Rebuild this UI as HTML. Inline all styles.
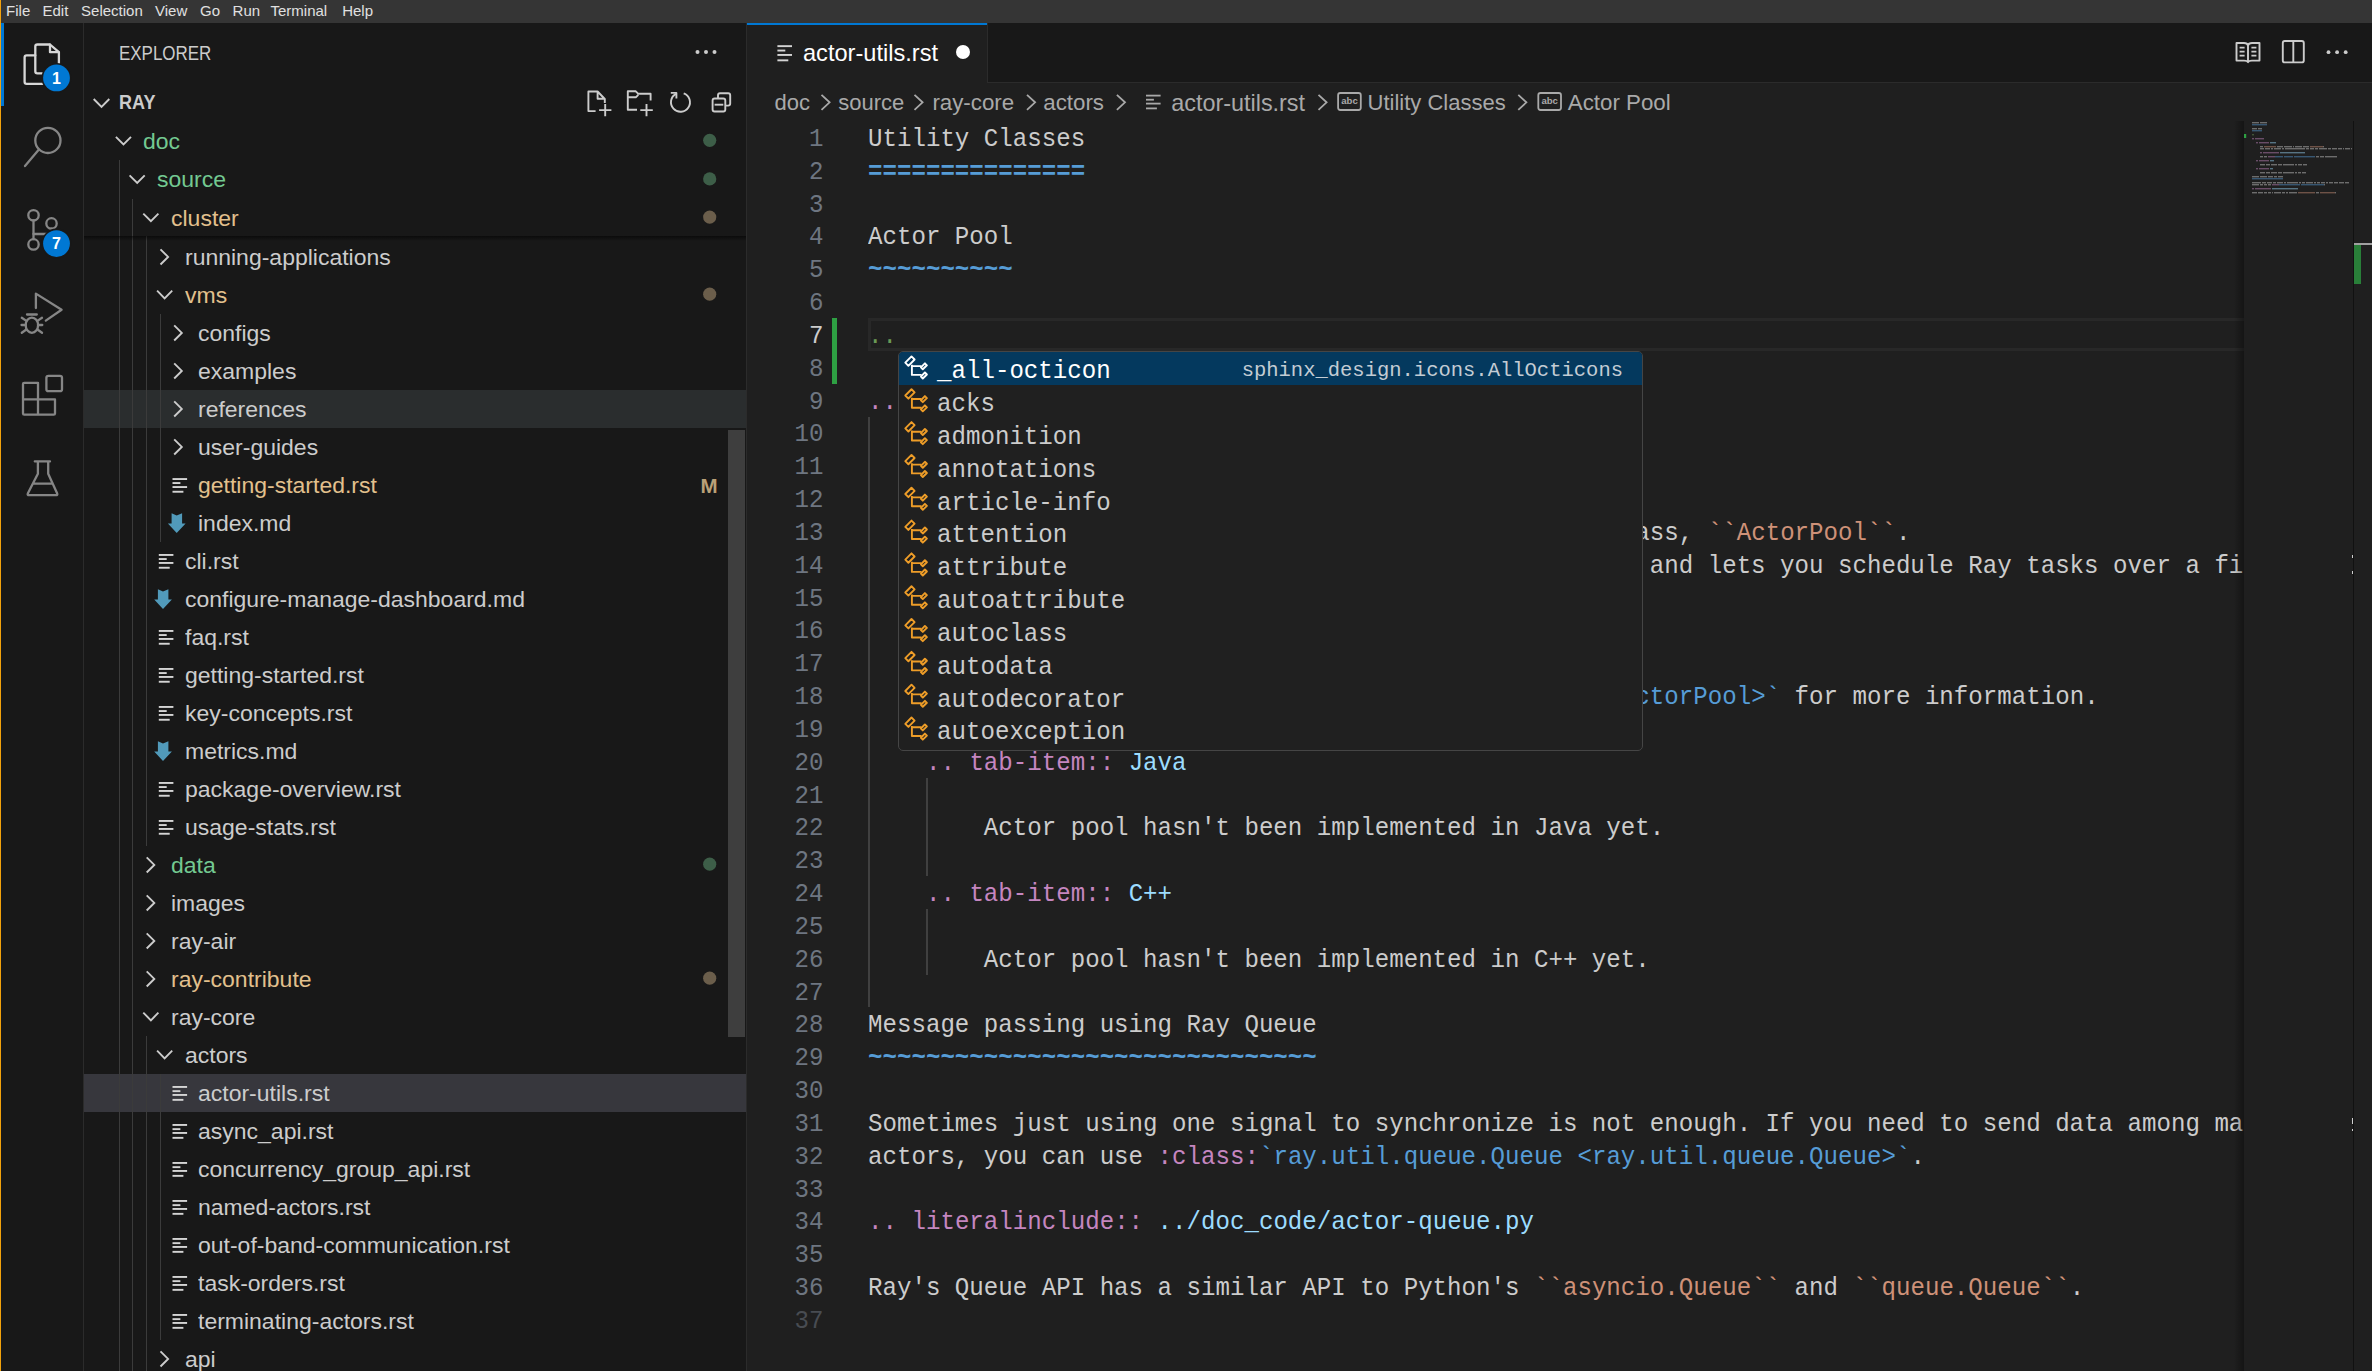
<!DOCTYPE html><html><head><meta charset="utf-8"><style>
*{box-sizing:border-box;margin:0;padding:0}
html,body{width:2372px;height:1371px;overflow:hidden;background:#1f1f1f}
body{position:relative;font-family:"Liberation Sans",sans-serif;color:#cccccc}
.a{position:absolute}
.mono{font-family:"Liberation Mono",monospace}
.ln{position:absolute;left:0;width:823.5px;transform:scaleY(1.08);transform-origin:0 24px;text-align:right;font-family:"Liberation Mono",monospace;font-size:24.13px;color:#6e7681;white-space:pre}
.cl{position:absolute;left:868px;transform:scaleY(1.08);transform-origin:0 24px;font-family:"Liberation Mono",monospace;font-size:24.13px;color:#cccccc;white-space:pre}
.row{position:absolute;left:84px;width:662px;height:38.1px;font-size:23px;line-height:38.1px;white-space:pre}
.tw{position:absolute;width:17px;height:10px}
.k{color:#c586c0}.b{color:#569cd6}.lb{color:#9cdcfe}.o{color:#ce9178}.c{color:#6a9955}
</style></head><body><div class="a" style="left:0;top:0;width:2372px;height:23px;background:#353535"></div>
<div class="a" style="left:6.1px;top:0;height:23px;line-height:22px;font-size:15px;color:#e0e0e0;white-space:pre">File</div>
<div class="a" style="left:42.5px;top:0;height:23px;line-height:22px;font-size:15px;color:#e0e0e0;white-space:pre">Edit</div>
<div class="a" style="left:81.1px;top:0;height:23px;line-height:22px;font-size:15px;color:#e0e0e0;white-space:pre">Selection</div>
<div class="a" style="left:155.0px;top:0;height:23px;line-height:22px;font-size:15px;color:#e0e0e0;white-space:pre">View</div>
<div class="a" style="left:200.0px;top:0;height:23px;line-height:22px;font-size:15px;color:#e0e0e0;white-space:pre">Go</div>
<div class="a" style="left:232.6px;top:0;height:23px;line-height:22px;font-size:15px;color:#e0e0e0;white-space:pre">Run</div>
<div class="a" style="left:270.5px;top:0;height:23px;line-height:22px;font-size:15px;color:#e0e0e0;white-space:pre">Terminal</div>
<div class="a" style="left:342.2px;top:0;height:23px;line-height:22px;font-size:15px;color:#e0e0e0;white-space:pre">Help</div>
<div class="a" style="left:0;top:23px;width:83px;height:1348px;background:#181818"></div>
<div class="a" style="left:83px;top:23px;width:1px;height:1348px;background:#2b2b2b"></div>
<div class="a" style="left:84px;top:23px;width:662px;height:1348px;background:#181818"></div>
<div class="a" style="left:746px;top:23px;width:1px;height:1348px;background:#2b2b2b"></div>
<div class="a" style="left:0;top:0;width:1px;height:1371px;background:#f2a20c"></div>
<div class="a" style="left:1px;top:23px;width:3px;height:83px;background:#0078d4"></div>
<svg class="a" style="left:0;top:0" width="84" height="540" viewBox="0 0 84 540" fill="none" stroke-linecap="round" stroke-linejoin="round"><g stroke="#d7d7d7" stroke-width="2.3"><path d="M35.3,71.2 V46.6 q0,-2.1 2.1,-2.1 H50 L58.9,52.2 V71.2 q0,2.1 -2.1,2.1 H37.4 q-2.1,0 -2.1,-2.1 Z"/><path d="M50,44.6 V52.2 H58.7"/><path d="M35.3,55.4 H26.7 q-2.1,0 -2.1,2.1 V81.7 q0,2.1 2.1,2.1 H46"/></g><circle cx="56.5" cy="77.9" r="15" fill="#181818"/><circle cx="56.5" cy="77.9" r="13.4" fill="#0078d4"/><text x="56.5" y="83.6" text-anchor="middle" font-family="Liberation Sans" font-weight="bold" font-size="16" fill="#ffffff" stroke="none">1</text><g stroke="#868686" stroke-width="2.3"><circle cx="47.9" cy="140.4" r="12.6"/><path d="M38.9,149.6 L25,166"/></g><g stroke="#868686" stroke-width="2.3"><circle cx="33.5" cy="215.3" r="5.2"/><circle cx="51.5" cy="223.4" r="5.2"/><circle cx="33.5" cy="244.4" r="5.2"/><path d="M33.5,220.5 V239.2"/><path d="M51.5,228.6 V231 q0,3 -3,3 H33.5"/></g><circle cx="56.5" cy="243.6" r="15" fill="#181818"/><circle cx="56.5" cy="243.6" r="13.4" fill="#0078d4"/><text x="56.5" y="249.3" text-anchor="middle" font-family="Liberation Sans" font-weight="bold" font-size="16" fill="#ffffff" stroke="none">7</text><g stroke="#868686" stroke-width="2.3"><path d="M35.9,308 V293.6 L61.6,309.7 L45.8,320.6"/><ellipse cx="31.9" cy="325.2" rx="6.2" ry="7.6"/><path d="M21.8,317.8 L26,320.6 M42,317.8 L37.8,320.6 M21.5,325 H25.8 M42.3,325 H38 M21.8,332.8 L26,329.8 M42,332.8 L37.8,329.8 M27,314.5 H36.8"/></g><g stroke="#868686" stroke-width="2.3"><path d="M23,384 q0,-1.2 1.2,-1.2 H38 V399.4 H55 V413.4 q0,1.2 -1.2,1.2 H24.2 q-1.2,0 -1.2,-1.2 Z M23,399.4 H38 V414.6"/><rect x="46.4" y="375.8" width="15.6" height="15.4" rx="2"/></g><g stroke="#868686" stroke-width="2.3"><path d="M34.8,461.4 H50 M37.9,461.4 V473.8 L27.8,493.6 q-0.6,1.6 1.2,1.6 H56 q1.8,0 1.2,-1.6 L48.2,473.8 V461.4 M33.3,483.6 H52.8"/></g></svg>
<div class="a" style="left:119px;top:36.4px;font-size:19.6px;line-height:34px;color:#cccccc;white-space:pre;transform:scaleX(0.865);transform-origin:0 0">EXPLORER</div>
<svg class="a" style="left:690px;top:45px" width="32" height="14"><circle cx="7.5" cy="7" r="2" fill="#cccccc"/><circle cx="16" cy="7" r="2" fill="#cccccc"/><circle cx="24.5" cy="7" r="2" fill="#cccccc"/></svg>
<svg class="a" style="left:84px;top:83px" width="40" height="38" fill="none"><path d="M9.7,16 L17.5,23.8 L25.3,16" stroke="#cccccc" stroke-width="1.9"/></svg>
<div class="a" style="left:119px;top:83.3px;font-size:19.4px;font-weight:bold;line-height:38px;color:#cccccc;white-space:pre;transform:scaleX(0.93);transform-origin:0 0">RAY</div>
<svg class="a" style="left:570px;top:80px" width="175" height="42" fill="none" stroke="#cccccc" stroke-width="1.9" stroke-linejoin="round"><g transform="translate(-570,-80)"><path d="M595.6,111.1 H588.4 V91.5 H597.6 L604.8,99 V103 M597.6,91.5 V98.8 H604.8 M605.2,104 V116.2 M599.1,110.1 H611.4"/><path d="M637,109.7 H627.8 V91.3 H635.8 L638.3,93.8 H650.6 V100.5 M627.8,97.3 H635.8 L638.3,94.8 M646.5,104 V116.2 M640.3,110.1 H652.8"/><path d="M675.9,93.9 A9.5,9.5 0 1 0 683.7,93.3"/><path d="M670.8,92.9 H676.4 V98.6"/><path d="M718,98.4 V95.3 q0,-2 2,-2 H728.2 q2,0 2,2 V103.6 q0,2 -2,2 H725.4"/><rect x="712.6" y="98.5" width="12.7" height="13" rx="2"/><path d="M714.6,104.7 H723.3"/></g></svg>
<div class="a" style="left:84px;top:389.9px;width:662px;height:38px;background:#2a2d2e"></div>
<div class="a" style="left:84px;top:1073.9px;width:662px;height:38px;background:#37373d"></div>
<div class="a" style="left:118.6px;top:236.0px;width:1px;height:1135.0px;background:#3b3b3b"></div>
<div class="a" style="left:132.4px;top:236.0px;width:1px;height:1135.0px;background:#3b3b3b"></div>
<div class="a" style="left:146.4px;top:236.0px;width:1px;height:609.9px;background:#3b3b3b"></div>
<div class="a" style="left:160.2px;top:313.9px;width:1px;height:228.0px;background:#3b3b3b"></div>
<div class="a" style="left:146.4px;top:1035.9px;width:1px;height:335.1px;background:#3b3b3b"></div>
<div class="a" style="left:160.2px;top:1073.9px;width:1px;height:266.0px;background:#3b3b3b"></div>
<div class="a" style="left:184.6px;top:238.70px;height:38.1px;font-size:22px;line-height:38.1px;color:#cccccc;white-space:pre;transform:scaleX(1.045);transform-origin:0 0">running-applications</div>
<div class="a" style="left:184.6px;top:276.70px;height:38.1px;font-size:22px;line-height:38.1px;color:#e2c08d;white-space:pre;transform:scaleX(1.045);transform-origin:0 0">vms</div>
<div class="a" style="left:198.3px;top:314.70px;height:38.1px;font-size:22px;line-height:38.1px;color:#cccccc;white-space:pre;transform:scaleX(1.045);transform-origin:0 0">configs</div>
<div class="a" style="left:198.3px;top:352.70px;height:38.1px;font-size:22px;line-height:38.1px;color:#cccccc;white-space:pre;transform:scaleX(1.045);transform-origin:0 0">examples</div>
<div class="a" style="left:198.3px;top:390.70px;height:38.1px;font-size:22px;line-height:38.1px;color:#cccccc;white-space:pre;transform:scaleX(1.045);transform-origin:0 0">references</div>
<div class="a" style="left:198.3px;top:428.70px;height:38.1px;font-size:22px;line-height:38.1px;color:#cccccc;white-space:pre;transform:scaleX(1.045);transform-origin:0 0">user-guides</div>
<div class="a" style="left:198.3px;top:466.70px;height:38.1px;font-size:22px;line-height:38.1px;color:#e2c08d;white-space:pre;transform:scaleX(1.045);transform-origin:0 0">getting-started.rst</div>
<div class="a" style="left:700.5px;top:467.3px;height:38.1px;font-size:20.5px;font-weight:bold;line-height:38.1px;color:#b9a077;white-space:pre">M</div>
<div class="a" style="left:198.3px;top:504.70px;height:38.1px;font-size:22px;line-height:38.1px;color:#cccccc;white-space:pre;transform:scaleX(1.045);transform-origin:0 0">index.md</div>
<div class="a" style="left:184.6px;top:542.70px;height:38.1px;font-size:22px;line-height:38.1px;color:#cccccc;white-space:pre;transform:scaleX(1.045);transform-origin:0 0">cli.rst</div>
<div class="a" style="left:184.6px;top:580.70px;height:38.1px;font-size:22px;line-height:38.1px;color:#cccccc;white-space:pre;transform:scaleX(1.045);transform-origin:0 0">configure-manage-dashboard.md</div>
<div class="a" style="left:184.6px;top:618.70px;height:38.1px;font-size:22px;line-height:38.1px;color:#cccccc;white-space:pre;transform:scaleX(1.045);transform-origin:0 0">faq.rst</div>
<div class="a" style="left:184.6px;top:656.70px;height:38.1px;font-size:22px;line-height:38.1px;color:#cccccc;white-space:pre;transform:scaleX(1.045);transform-origin:0 0">getting-started.rst</div>
<div class="a" style="left:184.6px;top:694.70px;height:38.1px;font-size:22px;line-height:38.1px;color:#cccccc;white-space:pre;transform:scaleX(1.045);transform-origin:0 0">key-concepts.rst</div>
<div class="a" style="left:184.6px;top:732.70px;height:38.1px;font-size:22px;line-height:38.1px;color:#cccccc;white-space:pre;transform:scaleX(1.045);transform-origin:0 0">metrics.md</div>
<div class="a" style="left:184.6px;top:770.70px;height:38.1px;font-size:22px;line-height:38.1px;color:#cccccc;white-space:pre;transform:scaleX(1.045);transform-origin:0 0">package-overview.rst</div>
<div class="a" style="left:184.6px;top:808.70px;height:38.1px;font-size:22px;line-height:38.1px;color:#cccccc;white-space:pre;transform:scaleX(1.045);transform-origin:0 0">usage-stats.rst</div>
<div class="a" style="left:170.8px;top:846.70px;height:38.1px;font-size:22px;line-height:38.1px;color:#73c991;white-space:pre;transform:scaleX(1.045);transform-origin:0 0">data</div>
<div class="a" style="left:170.8px;top:884.70px;height:38.1px;font-size:22px;line-height:38.1px;color:#cccccc;white-space:pre;transform:scaleX(1.045);transform-origin:0 0">images</div>
<div class="a" style="left:170.8px;top:922.70px;height:38.1px;font-size:22px;line-height:38.1px;color:#cccccc;white-space:pre;transform:scaleX(1.045);transform-origin:0 0">ray-air</div>
<div class="a" style="left:170.8px;top:960.70px;height:38.1px;font-size:22px;line-height:38.1px;color:#e2c08d;white-space:pre;transform:scaleX(1.045);transform-origin:0 0">ray-contribute</div>
<div class="a" style="left:170.8px;top:998.70px;height:38.1px;font-size:22px;line-height:38.1px;color:#cccccc;white-space:pre;transform:scaleX(1.045);transform-origin:0 0">ray-core</div>
<div class="a" style="left:184.6px;top:1036.70px;height:38.1px;font-size:22px;line-height:38.1px;color:#cccccc;white-space:pre;transform:scaleX(1.045);transform-origin:0 0">actors</div>
<div class="a" style="left:198.3px;top:1074.70px;height:38.1px;font-size:22px;line-height:38.1px;color:#cccccc;white-space:pre;transform:scaleX(1.045);transform-origin:0 0">actor-utils.rst</div>
<div class="a" style="left:198.3px;top:1112.70px;height:38.1px;font-size:22px;line-height:38.1px;color:#cccccc;white-space:pre;transform:scaleX(1.045);transform-origin:0 0">async_api.rst</div>
<div class="a" style="left:198.3px;top:1150.70px;height:38.1px;font-size:22px;line-height:38.1px;color:#cccccc;white-space:pre;transform:scaleX(1.045);transform-origin:0 0">concurrency_group_api.rst</div>
<div class="a" style="left:198.3px;top:1188.70px;height:38.1px;font-size:22px;line-height:38.1px;color:#cccccc;white-space:pre;transform:scaleX(1.045);transform-origin:0 0">named-actors.rst</div>
<div class="a" style="left:198.3px;top:1226.70px;height:38.1px;font-size:22px;line-height:38.1px;color:#cccccc;white-space:pre;transform:scaleX(1.045);transform-origin:0 0">out-of-band-communication.rst</div>
<div class="a" style="left:198.3px;top:1264.70px;height:38.1px;font-size:22px;line-height:38.1px;color:#cccccc;white-space:pre;transform:scaleX(1.045);transform-origin:0 0">task-orders.rst</div>
<div class="a" style="left:198.3px;top:1302.70px;height:38.1px;font-size:22px;line-height:38.1px;color:#cccccc;white-space:pre;transform:scaleX(1.045);transform-origin:0 0">terminating-actors.rst</div>
<div class="a" style="left:184.6px;top:1340.70px;height:38.1px;font-size:22px;line-height:38.1px;color:#cccccc;white-space:pre;transform:scaleX(1.045);transform-origin:0 0">api</div>
<svg class="a" style="left:0;top:0" width="760" height="1371"><path d="M160.5,249.3 L168.1,256.9 L160.5,264.5" stroke="#cccccc" stroke-width="1.9" fill="none"/><path d="M157.1,290.7 L164.6,298.3 L172.2,290.7" stroke="#cccccc" stroke-width="1.9" fill="none"/><circle cx="709.7" cy="294.2" r="6.6" fill="#6b5e4b"/><path d="M174.2,325.3 L181.8,332.9 L174.2,340.5" stroke="#cccccc" stroke-width="1.9" fill="none"/><path d="M174.2,363.3 L181.8,370.9 L174.2,378.5" stroke="#cccccc" stroke-width="1.9" fill="none"/><path d="M174.2,401.3 L181.8,408.9 L174.2,416.5" stroke="#cccccc" stroke-width="1.9" fill="none"/><path d="M174.2,439.3 L181.8,446.9 L174.2,454.5" stroke="#cccccc" stroke-width="1.9" fill="none"/><rect x="172.5" y="478.1" width="14.6" height="1.9" fill="#d4d4d4"/><rect x="172.5" y="482.1" width="7.9" height="1.9" fill="#d4d4d4"/><rect x="172.5" y="486.1" width="14.6" height="1.9" fill="#d4d4d4"/><rect x="172.5" y="490.8" width="10.9" height="1.9" fill="#d4d4d4"/><path d="M171.6,513.3 L176.7,515.6 L182.1,513.3 V523.5 H185.6 L176.7,533.0 L167.9,523.5 H171.6 Z" fill="#519aba"/><rect x="158.8" y="554.0" width="14.6" height="1.9" fill="#d4d4d4"/><rect x="158.8" y="558.1" width="7.9" height="1.9" fill="#d4d4d4"/><rect x="158.8" y="562.0" width="14.6" height="1.9" fill="#d4d4d4"/><rect x="158.8" y="566.8" width="10.9" height="1.9" fill="#d4d4d4"/><path d="M157.9,589.3 L163.0,591.6 L168.4,589.3 V599.5 H171.9 L163.0,609.0 L154.2,599.5 H157.9 Z" fill="#519aba"/><rect x="158.8" y="630.0" width="14.6" height="1.9" fill="#d4d4d4"/><rect x="158.8" y="634.1" width="7.9" height="1.9" fill="#d4d4d4"/><rect x="158.8" y="638.0" width="14.6" height="1.9" fill="#d4d4d4"/><rect x="158.8" y="642.8" width="10.9" height="1.9" fill="#d4d4d4"/><rect x="158.8" y="668.0" width="14.6" height="1.9" fill="#d4d4d4"/><rect x="158.8" y="672.1" width="7.9" height="1.9" fill="#d4d4d4"/><rect x="158.8" y="676.0" width="14.6" height="1.9" fill="#d4d4d4"/><rect x="158.8" y="680.8" width="10.9" height="1.9" fill="#d4d4d4"/><rect x="158.8" y="706.0" width="14.6" height="1.9" fill="#d4d4d4"/><rect x="158.8" y="710.1" width="7.9" height="1.9" fill="#d4d4d4"/><rect x="158.8" y="714.0" width="14.6" height="1.9" fill="#d4d4d4"/><rect x="158.8" y="718.8" width="10.9" height="1.9" fill="#d4d4d4"/><path d="M157.9,741.3 L163.0,743.6 L168.4,741.3 V751.5 H171.9 L163.0,761.0 L154.2,751.5 H157.9 Z" fill="#519aba"/><rect x="158.8" y="782.0" width="14.6" height="1.9" fill="#d4d4d4"/><rect x="158.8" y="786.1" width="7.9" height="1.9" fill="#d4d4d4"/><rect x="158.8" y="790.0" width="14.6" height="1.9" fill="#d4d4d4"/><rect x="158.8" y="794.8" width="10.9" height="1.9" fill="#d4d4d4"/><rect x="158.8" y="820.0" width="14.6" height="1.9" fill="#d4d4d4"/><rect x="158.8" y="824.1" width="7.9" height="1.9" fill="#d4d4d4"/><rect x="158.8" y="828.0" width="14.6" height="1.9" fill="#d4d4d4"/><rect x="158.8" y="832.8" width="10.9" height="1.9" fill="#d4d4d4"/><path d="M146.7,857.3 L154.3,864.9 L146.7,872.5" stroke="#cccccc" stroke-width="1.9" fill="none"/><circle cx="709.7" cy="864.2" r="6.6" fill="#3d5e48"/><path d="M146.7,895.3 L154.3,902.9 L146.7,910.5" stroke="#cccccc" stroke-width="1.9" fill="none"/><path d="M146.7,933.3 L154.3,940.9 L146.7,948.5" stroke="#cccccc" stroke-width="1.9" fill="none"/><path d="M146.7,971.3 L154.3,978.9 L146.7,986.5" stroke="#cccccc" stroke-width="1.9" fill="none"/><circle cx="709.7" cy="978.2" r="6.6" fill="#6b5e4b"/><path d="M143.3,1012.7 L150.9,1020.3 L158.4,1012.7" stroke="#cccccc" stroke-width="1.9" fill="none"/><path d="M157.1,1050.7 L164.6,1058.3 L172.2,1050.7" stroke="#cccccc" stroke-width="1.9" fill="none"/><rect x="172.5" y="1086.0" width="14.6" height="1.9" fill="#d4d4d4"/><rect x="172.5" y="1090.2" width="7.9" height="1.9" fill="#d4d4d4"/><rect x="172.5" y="1094.0" width="14.6" height="1.9" fill="#d4d4d4"/><rect x="172.5" y="1098.9" width="10.9" height="1.9" fill="#d4d4d4"/><rect x="172.5" y="1124.0" width="14.6" height="1.9" fill="#d4d4d4"/><rect x="172.5" y="1128.2" width="7.9" height="1.9" fill="#d4d4d4"/><rect x="172.5" y="1132.0" width="14.6" height="1.9" fill="#d4d4d4"/><rect x="172.5" y="1136.9" width="10.9" height="1.9" fill="#d4d4d4"/><rect x="172.5" y="1162.0" width="14.6" height="1.9" fill="#d4d4d4"/><rect x="172.5" y="1166.2" width="7.9" height="1.9" fill="#d4d4d4"/><rect x="172.5" y="1170.0" width="14.6" height="1.9" fill="#d4d4d4"/><rect x="172.5" y="1174.9" width="10.9" height="1.9" fill="#d4d4d4"/><rect x="172.5" y="1200.0" width="14.6" height="1.9" fill="#d4d4d4"/><rect x="172.5" y="1204.2" width="7.9" height="1.9" fill="#d4d4d4"/><rect x="172.5" y="1208.0" width="14.6" height="1.9" fill="#d4d4d4"/><rect x="172.5" y="1212.9" width="10.9" height="1.9" fill="#d4d4d4"/><rect x="172.5" y="1238.0" width="14.6" height="1.9" fill="#d4d4d4"/><rect x="172.5" y="1242.2" width="7.9" height="1.9" fill="#d4d4d4"/><rect x="172.5" y="1246.0" width="14.6" height="1.9" fill="#d4d4d4"/><rect x="172.5" y="1250.9" width="10.9" height="1.9" fill="#d4d4d4"/><rect x="172.5" y="1276.0" width="14.6" height="1.9" fill="#d4d4d4"/><rect x="172.5" y="1280.2" width="7.9" height="1.9" fill="#d4d4d4"/><rect x="172.5" y="1284.0" width="14.6" height="1.9" fill="#d4d4d4"/><rect x="172.5" y="1288.9" width="10.9" height="1.9" fill="#d4d4d4"/><rect x="172.5" y="1314.0" width="14.6" height="1.9" fill="#d4d4d4"/><rect x="172.5" y="1318.2" width="7.9" height="1.9" fill="#d4d4d4"/><rect x="172.5" y="1322.0" width="14.6" height="1.9" fill="#d4d4d4"/><rect x="172.5" y="1326.9" width="10.9" height="1.9" fill="#d4d4d4"/><path d="M160.5,1351.3 L168.1,1358.9 L160.5,1366.5" stroke="#cccccc" stroke-width="1.9" fill="none"/></svg>
<div class="a" style="left:728px;top:430px;width:17px;height:607px;background:rgba(121,121,121,0.4)"></div>
<div class="a" style="left:84px;top:121px;width:662px;height:115px;background:#181818"></div>
<div class="a" style="left:118.6px;top:160.2px;width:1px;height:76px;background:#3b3b3b"></div>
<div class="a" style="left:132.4px;top:198.5px;width:1px;height:37.5px;background:#3b3b3b"></div>
<div class="a" style="left:143.4px;top:122.80px;height:38.1px;font-size:22px;line-height:38.1px;color:#73c991;white-space:pre;transform:scaleX(1.045);transform-origin:0 0">doc</div>
<div class="a" style="left:157.1px;top:161.40px;height:38.1px;font-size:22px;line-height:38.1px;color:#73c991;white-space:pre;transform:scaleX(1.045);transform-origin:0 0">source</div>
<div class="a" style="left:170.8px;top:199.60px;height:38.1px;font-size:22px;line-height:38.1px;color:#e2c08d;white-space:pre;transform:scaleX(1.045);transform-origin:0 0">cluster</div>
<svg class="a" style="left:0;top:0" width="760" height="300"><path d="M115.9,136.8 L123.5,144.4 L131.0,136.8" stroke="#cccccc" stroke-width="1.9" fill="none"/><circle cx="709.7" cy="140.3" r="6.6" fill="#3d5e48"/><path d="M129.6,175.4 L137.2,183.0 L144.7,175.4" stroke="#cccccc" stroke-width="1.9" fill="none"/><circle cx="709.7" cy="178.9" r="6.6" fill="#3d5e48"/><path d="M143.3,213.6 L150.9,221.2 L158.4,213.6" stroke="#cccccc" stroke-width="1.9" fill="none"/><circle cx="709.7" cy="217.1" r="6.6" fill="#6b5e4b"/></svg>
<div class="a" style="left:84px;top:236px;width:662px;height:5px;background:linear-gradient(rgba(0,0,0,0.55),rgba(0,0,0,0))"></div>
<div class="a" style="left:747px;top:23px;width:1625px;height:59px;background:#181818"></div>
<div class="a" style="left:747px;top:81.5px;width:1625px;height:1px;background:#2b2b2b"></div>
<div class="a" style="left:747px;top:23px;width:240px;height:59.5px;background:#1f1f1f"></div>
<div class="a" style="left:747px;top:23px;width:240px;height:2px;background:#0078d4"></div>
<div class="a" style="left:987px;top:23px;width:1px;height:59px;background:#2b2b2b"></div>
<svg class="a" style="left:770px;top:40px" width="30" height="26"><rect x="7.4" y="5.2" width="14.6" height="1.9" fill="#d4d4d4"/><rect x="7.4" y="9.6" width="7.9" height="1.9" fill="#d4d4d4"/><rect x="7.4" y="14" width="14.6" height="1.9" fill="#d4d4d4"/><rect x="7.4" y="19.4" width="10.9" height="1.9" fill="#d4d4d4"/></svg>
<div class="a" style="left:803px;top:34px;font-size:23.6px;line-height:38px;color:#ffffff;white-space:pre">actor-utils.rst</div>
<div class="a" style="left:956.4px;top:44.8px;width:14px;height:14px;border-radius:7px;background:#ffffff"></div>
<svg class="a" style="left:2228px;top:36px" width="130" height="32" fill="none" stroke="#cccccc" stroke-width="1.9" stroke-linejoin="round"><path d="M8.5,7 H16 q3.4,0 4,2.4 q0.6,-2.4 4,-2.4 H31.5 V24.6 H24 q-3.4,0 -4,1.6 q-0.6,-1.6 -4,-1.6 H8.5 Z M20,9.4 V26"/><path d="M11.6,11.6 H16.6 M11.6,15.6 H16.6 M11.6,19.6 H16.6 M23.4,11.6 H28.4 M23.4,15.6 H28.4 M23.4,19.6 H28.4" stroke-width="1.7"/><rect x="54.8" y="5" width="21" height="21.4" rx="2"/><path d="M65.3,5 V26.4"/><circle cx="100.5" cy="16.2" r="1.9" fill="#cccccc" stroke="none"/><circle cx="109.1" cy="16.2" r="1.9" fill="#cccccc" stroke="none"/><circle cx="117.7" cy="16.2" r="1.9" fill="#cccccc" stroke="none"/></svg>
<div class="a" style="left:774.6px;top:83.5px;font-size:22px;line-height:38px;color:#a9a9a9;white-space:pre">doc</div>
<div class="a" style="left:838.2px;top:83.5px;font-size:22px;line-height:38px;color:#a9a9a9;white-space:pre">source</div>
<div class="a" style="left:932.4px;top:83.5px;font-size:22.3px;line-height:38px;color:#a9a9a9;white-space:pre">ray-core</div>
<div class="a" style="left:1043.3px;top:83.5px;font-size:22.3px;line-height:38px;color:#a9a9a9;white-space:pre">actors</div>
<div class="a" style="left:1171.2px;top:83.5px;font-size:23.4px;line-height:38px;color:#a9a9a9;white-space:pre">actor-utils.rst</div>
<div class="a" style="left:1367.5px;top:83.5px;font-size:22px;line-height:38px;color:#a9a9a9;white-space:pre">Utility Classes</div>
<div class="a" style="left:1567.8px;top:83.5px;font-size:22.3px;line-height:38px;color:#a9a9a9;white-space:pre">Actor Pool</div>
<svg class="a" style="left:747px;top:82px" width="1000" height="40" fill="none" stroke="#a9a9a9" stroke-width="1.8"><path d="M74.5,12.8 L82.6,20.35 L74.5,27.9"/><path d="M167.5,12.8 L175.6,20.35 L167.5,27.9"/><path d="M280.0,12.8 L288.1,20.35 L280.0,27.9"/><path d="M369.9,12.8 L378.0,20.35 L369.9,27.9"/><path d="M571.5,12.8 L579.6,20.35 L571.5,27.9"/><path d="M771.3,12.8 L779.4,20.35 L771.3,27.9"/><rect x="399.0" y="12.7" width="14.6" height="1.8" fill="#a9a9a9" stroke="none"/><rect x="399.0" y="16.8" width="7.9" height="1.8" fill="#a9a9a9" stroke="none"/><rect x="399.0" y="20.7" width="14.6" height="1.8" fill="#a9a9a9" stroke="none"/><rect x="399.0" y="25.5" width="10.9" height="1.8" fill="#a9a9a9" stroke="none"/><rect x="591.1" y="11" width="22.7" height="17" rx="2.2" stroke-width="1.8"/><text x="602.5" y="22.4" text-anchor="middle" font-family="Liberation Sans" font-size="9.6" font-weight="bold" fill="#a9a9a9" stroke="none">abc</text><rect x="791.3" y="11" width="22.7" height="17" rx="2.2" stroke-width="1.8"/><text x="802.7" y="22.4" text-anchor="middle" font-family="Liberation Sans" font-size="9.6" font-weight="bold" fill="#a9a9a9" stroke="none">abc</text></svg>
<div class="a" style="left:868px;top:318.0px;width:1400px;height:32.83px;border:3px solid #282828"></div>
<div class="a" style="left:832px;top:318.0px;width:5.3px;height:65.7px;background:#2ea043"></div>
<div class="a" style="left:868.0px;top:416.5px;width:1.5px;height:590.9px;background:#404040"></div>
<div class="a" style="left:926.4px;top:482.1px;width:1.5px;height:229.8px;background:#404040"></div>
<div class="a" style="left:926.4px;top:777.6px;width:1.5px;height:98.5px;background:#404040"></div>
<div class="a" style="left:926.4px;top:908.9px;width:1.5px;height:65.7px;background:#404040"></div>
<div class="ln" style="top:123.9px;line-height:32.83px;color:#6e7681">1</div>
<div class="ln" style="top:156.7px;line-height:32.83px;color:#6e7681">2</div>
<div class="ln" style="top:189.6px;line-height:32.83px;color:#6e7681">3</div>
<div class="ln" style="top:222.4px;line-height:32.83px;color:#6e7681">4</div>
<div class="ln" style="top:255.2px;line-height:32.83px;color:#6e7681">5</div>
<div class="ln" style="top:288.0px;line-height:32.83px;color:#6e7681">6</div>
<div class="ln" style="top:320.9px;line-height:32.83px;color:#cccccc">7</div>
<div class="ln" style="top:353.7px;line-height:32.83px;color:#6e7681">8</div>
<div class="ln" style="top:386.5px;line-height:32.83px;color:#6e7681">9</div>
<div class="ln" style="top:419.4px;line-height:32.83px;color:#6e7681">10</div>
<div class="ln" style="top:452.2px;line-height:32.83px;color:#6e7681">11</div>
<div class="ln" style="top:485.0px;line-height:32.83px;color:#6e7681">12</div>
<div class="ln" style="top:517.9px;line-height:32.83px;color:#6e7681">13</div>
<div class="ln" style="top:550.7px;line-height:32.83px;color:#6e7681">14</div>
<div class="ln" style="top:583.5px;line-height:32.83px;color:#6e7681">15</div>
<div class="ln" style="top:616.4px;line-height:32.83px;color:#6e7681">16</div>
<div class="ln" style="top:649.2px;line-height:32.83px;color:#6e7681">17</div>
<div class="ln" style="top:682.0px;line-height:32.83px;color:#6e7681">18</div>
<div class="ln" style="top:714.8px;line-height:32.83px;color:#6e7681">19</div>
<div class="ln" style="top:747.7px;line-height:32.83px;color:#6e7681">20</div>
<div class="ln" style="top:780.5px;line-height:32.83px;color:#6e7681">21</div>
<div class="ln" style="top:813.3px;line-height:32.83px;color:#6e7681">22</div>
<div class="ln" style="top:846.2px;line-height:32.83px;color:#6e7681">23</div>
<div class="ln" style="top:879.0px;line-height:32.83px;color:#6e7681">24</div>
<div class="ln" style="top:911.8px;line-height:32.83px;color:#6e7681">25</div>
<div class="ln" style="top:944.6px;line-height:32.83px;color:#6e7681">26</div>
<div class="ln" style="top:977.5px;line-height:32.83px;color:#6e7681">27</div>
<div class="ln" style="top:1010.3px;line-height:32.83px;color:#6e7681">28</div>
<div class="ln" style="top:1043.1px;line-height:32.83px;color:#6e7681">29</div>
<div class="ln" style="top:1076.0px;line-height:32.83px;color:#6e7681">30</div>
<div class="ln" style="top:1108.8px;line-height:32.83px;color:#6e7681">31</div>
<div class="ln" style="top:1141.6px;line-height:32.83px;color:#6e7681">32</div>
<div class="ln" style="top:1174.5px;line-height:32.83px;color:#6e7681">33</div>
<div class="ln" style="top:1207.3px;line-height:32.83px;color:#6e7681">34</div>
<div class="ln" style="top:1240.1px;line-height:32.83px;color:#6e7681">35</div>
<div class="ln" style="top:1273.0px;line-height:32.83px;color:#6e7681">36</div>
<div class="ln" style="top:1305.8px;line-height:32.83px;color:#484c52">37</div>
<div class="a" style="left:0;top:0;width:2244px;height:1371px;overflow:hidden"><div class="cl" style="top:123.9px;line-height:32.83px"><span style="color:#cccccc">Utility Classes</span></div><div class="cl" style="top:156.7px;line-height:32.83px"><span style="color:#569cd6;font-weight:bold">===============</span></div><div class="cl" style="top:222.4px;line-height:32.83px"><span style="color:#cccccc">Actor Pool</span></div><div class="cl" style="top:255.2px;line-height:32.83px"><span style="color:#569cd6;font-weight:bold">~~~~~~~~~~</span></div><div class="cl" style="top:320.9px;line-height:32.83px"><span style="color:#6a9955">..</span></div><div class="cl" style="top:386.5px;line-height:32.83px"><span style="color:#c586c0">..</span><span style="color:#cccccc"> </span><span style="color:#c586c0">tab-set::</span></div><div class="cl" style="top:452.2px;line-height:32.83px"><span style="color:#cccccc">    </span><span style="color:#c586c0">..</span><span style="color:#cccccc"> </span><span style="color:#c586c0">tab-item::</span><span style="color:#cccccc"> </span><span style="color:#9cdcfe">Python</span></div><div class="cl" style="top:517.9px;line-height:32.83px"><span style="color:#cccccc">        The </span><span style="color:#ce9178">``</span><span style="color:#ce9178">ray.util</span><span style="color:#ce9178">``</span><span style="color:#cccccc"> module contains a utility class, </span><span style="color:#ce9178">``</span><span style="color:#ce9178">ActorPool</span><span style="color:#ce9178">``</span><span style="color:#cccccc">.</span></div><div class="cl" style="top:550.7px;line-height:32.83px"><span style="color:#cccccc">        This class is similar to multiprocessing.Pool and lets you schedule Ray tasks over a fixed pool of actors.</span></div><div class="cl" style="top:616.4px;line-height:32.83px"><span style="color:#cccccc">        </span><span style="color:#c586c0">..</span><span style="color:#cccccc"> </span><span style="color:#c586c0">literalinclude::</span><span style="color:#cccccc"> </span><span style="color:#9cdcfe">../doc_code/actor-pool.py</span></div><div class="cl" style="top:682.0px;line-height:32.83px"><span style="color:#cccccc">        See the </span><span style="color:#c586c0">:</span><span style="color:#c586c0">class</span><span style="color:#c586c0">:</span><span style="color:#569cd6">`</span><span style="color:#569cd6">package reference &lt;ray.util.ActorPool&gt;</span><span style="color:#569cd6">`</span><span style="color:#cccccc"> for more information.</span></div><div class="cl" style="top:747.7px;line-height:32.83px"><span style="color:#cccccc">    </span><span style="color:#c586c0">..</span><span style="color:#cccccc"> </span><span style="color:#c586c0">tab-item::</span><span style="color:#cccccc"> </span><span style="color:#9cdcfe">Java</span></div><div class="cl" style="top:813.3px;line-height:32.83px"><span style="color:#cccccc">        Actor pool hasn't been implemented in Java yet.</span></div><div class="cl" style="top:879.0px;line-height:32.83px"><span style="color:#cccccc">    </span><span style="color:#c586c0">..</span><span style="color:#cccccc"> </span><span style="color:#c586c0">tab-item::</span><span style="color:#cccccc"> </span><span style="color:#9cdcfe">C++</span></div><div class="cl" style="top:944.6px;line-height:32.83px"><span style="color:#cccccc">        Actor pool hasn't been implemented in C++ yet.</span></div><div class="cl" style="top:1010.3px;line-height:32.83px"><span style="color:#cccccc">Message passing using Ray Queue</span></div><div class="cl" style="top:1043.1px;line-height:32.83px"><span style="color:#569cd6;font-weight:bold">~~~~~~~~~~~~~~~~~~~~~~~~~~~~~~~</span></div><div class="cl" style="top:1108.8px;line-height:32.83px"><span style="color:#cccccc">Sometimes just using one signal to synchronize is not enough. If you need to send data among many</span></div><div class="cl" style="top:1141.6px;line-height:32.83px"><span style="color:#cccccc">actors, you can use </span><span style="color:#c586c0">:</span><span style="color:#c586c0">class</span><span style="color:#c586c0">:</span><span style="color:#569cd6">`</span><span style="color:#569cd6">ray.util.queue.Queue &lt;ray.util.queue.Queue&gt;</span><span style="color:#569cd6">`</span><span style="color:#cccccc">.</span></div><div class="cl" style="top:1207.3px;line-height:32.83px"><span style="color:#c586c0">..</span><span style="color:#cccccc"> </span><span style="color:#c586c0">literalinclude::</span><span style="color:#cccccc"> </span><span style="color:#9cdcfe">../doc_code/actor-queue.py</span></div><div class="cl" style="top:1273.0px;line-height:32.83px"><span style="color:#cccccc">Ray's Queue API has a similar API to Python's </span><span style="color:#ce9178">``</span><span style="color:#ce9178">asyncio.Queue</span><span style="color:#ce9178">``</span><span style="color:#cccccc"> and </span><span style="color:#ce9178">``</span><span style="color:#ce9178">queue.Queue</span><span style="color:#ce9178">``</span><span style="color:#cccccc">.</span></div></div>
<div class="a" style="left:898px;top:351px;width:745px;height:400px;background:#202020;border:1px solid #454545;border-radius:5px;overflow:hidden">
<div class="a" style="left:0;top:0;width:743px;height:33px;background:#04395e"></div>
<div class="a mono" style="left:38px;top:4.3px;transform:scaleY(1.08);transform-origin:0 24px;font-size:24.13px;line-height:32.83px;color:#ffffff;white-space:pre">_all-octicon</div>
<div class="a mono" style="left:38px;top:37.1px;transform:scaleY(1.08);transform-origin:0 24px;font-size:24.13px;line-height:32.83px;color:#cccccc;white-space:pre">acks</div>
<div class="a mono" style="left:38px;top:70.0px;transform:scaleY(1.08);transform-origin:0 24px;font-size:24.13px;line-height:32.83px;color:#cccccc;white-space:pre">admonition</div>
<div class="a mono" style="left:38px;top:102.8px;transform:scaleY(1.08);transform-origin:0 24px;font-size:24.13px;line-height:32.83px;color:#cccccc;white-space:pre">annotations</div>
<div class="a mono" style="left:38px;top:135.6px;transform:scaleY(1.08);transform-origin:0 24px;font-size:24.13px;line-height:32.83px;color:#cccccc;white-space:pre">article-info</div>
<div class="a mono" style="left:38px;top:168.4px;transform:scaleY(1.08);transform-origin:0 24px;font-size:24.13px;line-height:32.83px;color:#cccccc;white-space:pre">attention</div>
<div class="a mono" style="left:38px;top:201.3px;transform:scaleY(1.08);transform-origin:0 24px;font-size:24.13px;line-height:32.83px;color:#cccccc;white-space:pre">attribute</div>
<div class="a mono" style="left:38px;top:234.1px;transform:scaleY(1.08);transform-origin:0 24px;font-size:24.13px;line-height:32.83px;color:#cccccc;white-space:pre">autoattribute</div>
<div class="a mono" style="left:38px;top:266.9px;transform:scaleY(1.08);transform-origin:0 24px;font-size:24.13px;line-height:32.83px;color:#cccccc;white-space:pre">autoclass</div>
<div class="a mono" style="left:38px;top:299.8px;transform:scaleY(1.08);transform-origin:0 24px;font-size:24.13px;line-height:32.83px;color:#cccccc;white-space:pre">autodata</div>
<div class="a mono" style="left:38px;top:332.6px;transform:scaleY(1.08);transform-origin:0 24px;font-size:24.13px;line-height:32.83px;color:#cccccc;white-space:pre">autodecorator</div>
<div class="a mono" style="left:38px;top:365.4px;transform:scaleY(1.08);transform-origin:0 24px;font-size:24.13px;line-height:32.83px;color:#cccccc;white-space:pre">autoexception</div>
<svg class="a" style="left:0;top:0" width="40" height="400"><g transform="translate(0,0.40)" stroke="#ffffff" stroke-width="1.9" fill="none" stroke-linejoin="round"><path d="M12.5,4.0 L15.6,7.1 L9.4,13.4 L6.3,10.3 Z"/><path d="M12.9,12.4 V22.5 H22.6 M12.9,13.7 H22.4"/><path d="M25.9,10.9 L27.9,12.9 L23.8,16.9 L21.9,15.0 Z"/><path d="M25.9,20.1 L27.9,22.1 L23.8,26.1 L21.9,24.2 Z"/></g><g transform="translate(0,33.23)" stroke="#ee9d28" stroke-width="1.9" fill="none" stroke-linejoin="round"><path d="M12.5,4.0 L15.6,7.1 L9.4,13.4 L6.3,10.3 Z"/><path d="M12.9,12.4 V22.5 H22.6 M12.9,13.7 H22.4"/><path d="M25.9,10.9 L27.9,12.9 L23.8,16.9 L21.9,15.0 Z"/><path d="M25.9,20.1 L27.9,22.1 L23.8,26.1 L21.9,24.2 Z"/></g><g transform="translate(0,66.06)" stroke="#ee9d28" stroke-width="1.9" fill="none" stroke-linejoin="round"><path d="M12.5,4.0 L15.6,7.1 L9.4,13.4 L6.3,10.3 Z"/><path d="M12.9,12.4 V22.5 H22.6 M12.9,13.7 H22.4"/><path d="M25.9,10.9 L27.9,12.9 L23.8,16.9 L21.9,15.0 Z"/><path d="M25.9,20.1 L27.9,22.1 L23.8,26.1 L21.9,24.2 Z"/></g><g transform="translate(0,98.89)" stroke="#ee9d28" stroke-width="1.9" fill="none" stroke-linejoin="round"><path d="M12.5,4.0 L15.6,7.1 L9.4,13.4 L6.3,10.3 Z"/><path d="M12.9,12.4 V22.5 H22.6 M12.9,13.7 H22.4"/><path d="M25.9,10.9 L27.9,12.9 L23.8,16.9 L21.9,15.0 Z"/><path d="M25.9,20.1 L27.9,22.1 L23.8,26.1 L21.9,24.2 Z"/></g><g transform="translate(0,131.72)" stroke="#ee9d28" stroke-width="1.9" fill="none" stroke-linejoin="round"><path d="M12.5,4.0 L15.6,7.1 L9.4,13.4 L6.3,10.3 Z"/><path d="M12.9,12.4 V22.5 H22.6 M12.9,13.7 H22.4"/><path d="M25.9,10.9 L27.9,12.9 L23.8,16.9 L21.9,15.0 Z"/><path d="M25.9,20.1 L27.9,22.1 L23.8,26.1 L21.9,24.2 Z"/></g><g transform="translate(0,164.55)" stroke="#ee9d28" stroke-width="1.9" fill="none" stroke-linejoin="round"><path d="M12.5,4.0 L15.6,7.1 L9.4,13.4 L6.3,10.3 Z"/><path d="M12.9,12.4 V22.5 H22.6 M12.9,13.7 H22.4"/><path d="M25.9,10.9 L27.9,12.9 L23.8,16.9 L21.9,15.0 Z"/><path d="M25.9,20.1 L27.9,22.1 L23.8,26.1 L21.9,24.2 Z"/></g><g transform="translate(0,197.38)" stroke="#ee9d28" stroke-width="1.9" fill="none" stroke-linejoin="round"><path d="M12.5,4.0 L15.6,7.1 L9.4,13.4 L6.3,10.3 Z"/><path d="M12.9,12.4 V22.5 H22.6 M12.9,13.7 H22.4"/><path d="M25.9,10.9 L27.9,12.9 L23.8,16.9 L21.9,15.0 Z"/><path d="M25.9,20.1 L27.9,22.1 L23.8,26.1 L21.9,24.2 Z"/></g><g transform="translate(0,230.21)" stroke="#ee9d28" stroke-width="1.9" fill="none" stroke-linejoin="round"><path d="M12.5,4.0 L15.6,7.1 L9.4,13.4 L6.3,10.3 Z"/><path d="M12.9,12.4 V22.5 H22.6 M12.9,13.7 H22.4"/><path d="M25.9,10.9 L27.9,12.9 L23.8,16.9 L21.9,15.0 Z"/><path d="M25.9,20.1 L27.9,22.1 L23.8,26.1 L21.9,24.2 Z"/></g><g transform="translate(0,263.04)" stroke="#ee9d28" stroke-width="1.9" fill="none" stroke-linejoin="round"><path d="M12.5,4.0 L15.6,7.1 L9.4,13.4 L6.3,10.3 Z"/><path d="M12.9,12.4 V22.5 H22.6 M12.9,13.7 H22.4"/><path d="M25.9,10.9 L27.9,12.9 L23.8,16.9 L21.9,15.0 Z"/><path d="M25.9,20.1 L27.9,22.1 L23.8,26.1 L21.9,24.2 Z"/></g><g transform="translate(0,295.87)" stroke="#ee9d28" stroke-width="1.9" fill="none" stroke-linejoin="round"><path d="M12.5,4.0 L15.6,7.1 L9.4,13.4 L6.3,10.3 Z"/><path d="M12.9,12.4 V22.5 H22.6 M12.9,13.7 H22.4"/><path d="M25.9,10.9 L27.9,12.9 L23.8,16.9 L21.9,15.0 Z"/><path d="M25.9,20.1 L27.9,22.1 L23.8,26.1 L21.9,24.2 Z"/></g><g transform="translate(0,328.70)" stroke="#ee9d28" stroke-width="1.9" fill="none" stroke-linejoin="round"><path d="M12.5,4.0 L15.6,7.1 L9.4,13.4 L6.3,10.3 Z"/><path d="M12.9,12.4 V22.5 H22.6 M12.9,13.7 H22.4"/><path d="M25.9,10.9 L27.9,12.9 L23.8,16.9 L21.9,15.0 Z"/><path d="M25.9,20.1 L27.9,22.1 L23.8,26.1 L21.9,24.2 Z"/></g><g transform="translate(0,361.53)" stroke="#ee9d28" stroke-width="1.9" fill="none" stroke-linejoin="round"><path d="M12.5,4.0 L15.6,7.1 L9.4,13.4 L6.3,10.3 Z"/><path d="M12.9,12.4 V22.5 H22.6 M12.9,13.7 H22.4"/><path d="M25.9,10.9 L27.9,12.9 L23.8,16.9 L21.9,15.0 Z"/><path d="M25.9,20.1 L27.9,22.1 L23.8,26.1 L21.9,24.2 Z"/></g></svg>
<div class="a mono" style="right:19px;top:4.2px;font-size:20.5px;line-height:30px;color:#c3ccd4;white-space:pre">sphinx_design.icons.AllOcticons</div>
</div>
<div class="a" style="left:2244px;top:121px;width:128px;height:1250px;background:#1f1f1f"></div>
<div class="a" style="left:2234px;top:121px;width:10px;height:1250px;background:linear-gradient(90deg,rgba(0,0,0,0),rgba(0,0,0,0.35))"></div>
<svg class="a" style="left:2244px;top:121px" width="110" height="100"><rect x="8.0" y="1.0" width="7.0" height="1.4" fill="#cccccc" opacity="0.45"/><rect x="16.0" y="1.0" width="7.0" height="1.4" fill="#cccccc" opacity="0.45"/><rect x="8.0" y="3.0" width="15.0" height="1.4" fill="#569cd6" opacity="0.45"/><rect x="8.0" y="7.0" width="5.0" height="1.4" fill="#cccccc" opacity="0.45"/><rect x="14.0" y="7.0" width="4.0" height="1.4" fill="#cccccc" opacity="0.45"/><rect x="8.0" y="9.0" width="10.0" height="1.4" fill="#569cd6" opacity="0.45"/><rect x="8.0" y="13.0" width="2.0" height="1.4" fill="#6a9955" opacity="0.45"/><rect x="8.0" y="17.0" width="2.0" height="1.4" fill="#c586c0" opacity="0.45"/><rect x="11.0" y="17.0" width="9.0" height="1.4" fill="#c586c0" opacity="0.45"/><rect x="12.0" y="21.0" width="2.0" height="1.4" fill="#c586c0" opacity="0.45"/><rect x="15.0" y="21.0" width="10.0" height="1.4" fill="#c586c0" opacity="0.45"/><rect x="26.0" y="21.0" width="6.0" height="1.4" fill="#9cdcfe" opacity="0.45"/><rect x="16.0" y="25.0" width="3.0" height="1.4" fill="#cccccc" opacity="0.45"/><rect x="20.0" y="25.0" width="2.0" height="1.4" fill="#ce9178" opacity="0.45"/><rect x="22.0" y="25.0" width="8.0" height="1.4" fill="#ce9178" opacity="0.45"/><rect x="30.0" y="25.0" width="2.0" height="1.4" fill="#ce9178" opacity="0.45"/><rect x="33.0" y="25.0" width="6.0" height="1.4" fill="#cccccc" opacity="0.45"/><rect x="40.0" y="25.0" width="8.0" height="1.4" fill="#cccccc" opacity="0.45"/><rect x="49.0" y="25.0" width="1.0" height="1.4" fill="#cccccc" opacity="0.45"/><rect x="51.0" y="25.0" width="7.0" height="1.4" fill="#cccccc" opacity="0.45"/><rect x="59.0" y="25.0" width="6.0" height="1.4" fill="#cccccc" opacity="0.45"/><rect x="66.0" y="25.0" width="2.0" height="1.4" fill="#ce9178" opacity="0.45"/><rect x="68.0" y="25.0" width="9.0" height="1.4" fill="#ce9178" opacity="0.45"/><rect x="77.0" y="25.0" width="2.0" height="1.4" fill="#ce9178" opacity="0.45"/><rect x="79.0" y="25.0" width="1.0" height="1.4" fill="#cccccc" opacity="0.45"/><rect x="16.0" y="27.0" width="4.0" height="1.4" fill="#cccccc" opacity="0.45"/><rect x="21.0" y="27.0" width="5.0" height="1.4" fill="#cccccc" opacity="0.45"/><rect x="27.0" y="27.0" width="2.0" height="1.4" fill="#cccccc" opacity="0.45"/><rect x="30.0" y="27.0" width="7.0" height="1.4" fill="#cccccc" opacity="0.45"/><rect x="38.0" y="27.0" width="2.0" height="1.4" fill="#cccccc" opacity="0.45"/><rect x="41.0" y="27.0" width="20.0" height="1.4" fill="#cccccc" opacity="0.45"/><rect x="62.0" y="27.0" width="3.0" height="1.4" fill="#cccccc" opacity="0.45"/><rect x="66.0" y="27.0" width="4.0" height="1.4" fill="#cccccc" opacity="0.45"/><rect x="71.0" y="27.0" width="3.0" height="1.4" fill="#cccccc" opacity="0.45"/><rect x="75.0" y="27.0" width="8.0" height="1.4" fill="#cccccc" opacity="0.45"/><rect x="84.0" y="27.0" width="3.0" height="1.4" fill="#cccccc" opacity="0.45"/><rect x="88.0" y="27.0" width="5.0" height="1.4" fill="#cccccc" opacity="0.45"/><rect x="94.0" y="27.0" width="4.0" height="1.4" fill="#cccccc" opacity="0.45"/><rect x="99.0" y="27.0" width="1.0" height="1.4" fill="#cccccc" opacity="0.45"/><rect x="101.0" y="27.0" width="5.0" height="1.4" fill="#cccccc" opacity="0.45"/><rect x="107.0" y="27.0" width="1.0" height="1.4" fill="#cccccc" opacity="0.45"/><rect x="16.0" y="31.0" width="2.0" height="1.4" fill="#c586c0" opacity="0.45"/><rect x="19.0" y="31.0" width="16.0" height="1.4" fill="#c586c0" opacity="0.45"/><rect x="36.0" y="31.0" width="25.0" height="1.4" fill="#9cdcfe" opacity="0.45"/><rect x="16.0" y="35.0" width="3.0" height="1.4" fill="#cccccc" opacity="0.45"/><rect x="20.0" y="35.0" width="3.0" height="1.4" fill="#cccccc" opacity="0.45"/><rect x="24.0" y="35.0" width="1.0" height="1.4" fill="#c586c0" opacity="0.45"/><rect x="25.0" y="35.0" width="5.0" height="1.4" fill="#c586c0" opacity="0.45"/><rect x="30.0" y="35.0" width="1.0" height="1.4" fill="#c586c0" opacity="0.45"/><rect x="31.0" y="35.0" width="1.0" height="1.4" fill="#569cd6" opacity="0.45"/><rect x="32.0" y="35.0" width="7.0" height="1.4" fill="#569cd6" opacity="0.45"/><rect x="40.0" y="35.0" width="9.0" height="1.4" fill="#569cd6" opacity="0.45"/><rect x="50.0" y="35.0" width="20.0" height="1.4" fill="#569cd6" opacity="0.45"/><rect x="70.0" y="35.0" width="1.0" height="1.4" fill="#569cd6" opacity="0.45"/><rect x="72.0" y="35.0" width="3.0" height="1.4" fill="#cccccc" opacity="0.45"/><rect x="76.0" y="35.0" width="4.0" height="1.4" fill="#cccccc" opacity="0.45"/><rect x="81.0" y="35.0" width="12.0" height="1.4" fill="#cccccc" opacity="0.45"/><rect x="12.0" y="39.0" width="2.0" height="1.4" fill="#c586c0" opacity="0.45"/><rect x="15.0" y="39.0" width="10.0" height="1.4" fill="#c586c0" opacity="0.45"/><rect x="26.0" y="39.0" width="4.0" height="1.4" fill="#9cdcfe" opacity="0.45"/><rect x="16.0" y="43.0" width="5.0" height="1.4" fill="#cccccc" opacity="0.45"/><rect x="22.0" y="43.0" width="4.0" height="1.4" fill="#cccccc" opacity="0.45"/><rect x="27.0" y="43.0" width="6.0" height="1.4" fill="#cccccc" opacity="0.45"/><rect x="34.0" y="43.0" width="4.0" height="1.4" fill="#cccccc" opacity="0.45"/><rect x="39.0" y="43.0" width="11.0" height="1.4" fill="#cccccc" opacity="0.45"/><rect x="51.0" y="43.0" width="2.0" height="1.4" fill="#cccccc" opacity="0.45"/><rect x="54.0" y="43.0" width="4.0" height="1.4" fill="#cccccc" opacity="0.45"/><rect x="59.0" y="43.0" width="4.0" height="1.4" fill="#cccccc" opacity="0.45"/><rect x="12.0" y="47.0" width="2.0" height="1.4" fill="#c586c0" opacity="0.45"/><rect x="15.0" y="47.0" width="10.0" height="1.4" fill="#c586c0" opacity="0.45"/><rect x="26.0" y="47.0" width="3.0" height="1.4" fill="#9cdcfe" opacity="0.45"/><rect x="16.0" y="51.0" width="5.0" height="1.4" fill="#cccccc" opacity="0.45"/><rect x="22.0" y="51.0" width="4.0" height="1.4" fill="#cccccc" opacity="0.45"/><rect x="27.0" y="51.0" width="6.0" height="1.4" fill="#cccccc" opacity="0.45"/><rect x="34.0" y="51.0" width="4.0" height="1.4" fill="#cccccc" opacity="0.45"/><rect x="39.0" y="51.0" width="11.0" height="1.4" fill="#cccccc" opacity="0.45"/><rect x="51.0" y="51.0" width="2.0" height="1.4" fill="#cccccc" opacity="0.45"/><rect x="54.0" y="51.0" width="3.0" height="1.4" fill="#cccccc" opacity="0.45"/><rect x="58.0" y="51.0" width="4.0" height="1.4" fill="#cccccc" opacity="0.45"/><rect x="8.0" y="55.0" width="7.0" height="1.4" fill="#cccccc" opacity="0.45"/><rect x="16.0" y="55.0" width="7.0" height="1.4" fill="#cccccc" opacity="0.45"/><rect x="24.0" y="55.0" width="5.0" height="1.4" fill="#cccccc" opacity="0.45"/><rect x="30.0" y="55.0" width="3.0" height="1.4" fill="#cccccc" opacity="0.45"/><rect x="34.0" y="55.0" width="5.0" height="1.4" fill="#cccccc" opacity="0.45"/><rect x="8.0" y="57.0" width="31.0" height="1.4" fill="#569cd6" opacity="0.45"/><rect x="8.0" y="61.0" width="9.0" height="1.4" fill="#cccccc" opacity="0.45"/><rect x="18.0" y="61.0" width="4.0" height="1.4" fill="#cccccc" opacity="0.45"/><rect x="23.0" y="61.0" width="5.0" height="1.4" fill="#cccccc" opacity="0.45"/><rect x="29.0" y="61.0" width="3.0" height="1.4" fill="#cccccc" opacity="0.45"/><rect x="33.0" y="61.0" width="6.0" height="1.4" fill="#cccccc" opacity="0.45"/><rect x="40.0" y="61.0" width="2.0" height="1.4" fill="#cccccc" opacity="0.45"/><rect x="43.0" y="61.0" width="11.0" height="1.4" fill="#cccccc" opacity="0.45"/><rect x="55.0" y="61.0" width="2.0" height="1.4" fill="#cccccc" opacity="0.45"/><rect x="58.0" y="61.0" width="3.0" height="1.4" fill="#cccccc" opacity="0.45"/><rect x="62.0" y="61.0" width="7.0" height="1.4" fill="#cccccc" opacity="0.45"/><rect x="70.0" y="61.0" width="2.0" height="1.4" fill="#cccccc" opacity="0.45"/><rect x="73.0" y="61.0" width="3.0" height="1.4" fill="#cccccc" opacity="0.45"/><rect x="77.0" y="61.0" width="4.0" height="1.4" fill="#cccccc" opacity="0.45"/><rect x="82.0" y="61.0" width="2.0" height="1.4" fill="#cccccc" opacity="0.45"/><rect x="85.0" y="61.0" width="4.0" height="1.4" fill="#cccccc" opacity="0.45"/><rect x="90.0" y="61.0" width="4.0" height="1.4" fill="#cccccc" opacity="0.45"/><rect x="95.0" y="61.0" width="5.0" height="1.4" fill="#cccccc" opacity="0.45"/><rect x="101.0" y="61.0" width="4.0" height="1.4" fill="#cccccc" opacity="0.45"/><rect x="8.0" y="63.0" width="7.0" height="1.4" fill="#cccccc" opacity="0.45"/><rect x="16.0" y="63.0" width="3.0" height="1.4" fill="#cccccc" opacity="0.45"/><rect x="20.0" y="63.0" width="3.0" height="1.4" fill="#cccccc" opacity="0.45"/><rect x="24.0" y="63.0" width="3.0" height="1.4" fill="#cccccc" opacity="0.45"/><rect x="28.0" y="63.0" width="1.0" height="1.4" fill="#c586c0" opacity="0.45"/><rect x="29.0" y="63.0" width="5.0" height="1.4" fill="#c586c0" opacity="0.45"/><rect x="34.0" y="63.0" width="1.0" height="1.4" fill="#c586c0" opacity="0.45"/><rect x="35.0" y="63.0" width="1.0" height="1.4" fill="#569cd6" opacity="0.45"/><rect x="36.0" y="63.0" width="20.0" height="1.4" fill="#569cd6" opacity="0.45"/><rect x="57.0" y="63.0" width="22.0" height="1.4" fill="#569cd6" opacity="0.45"/><rect x="79.0" y="63.0" width="1.0" height="1.4" fill="#569cd6" opacity="0.45"/><rect x="80.0" y="63.0" width="1.0" height="1.4" fill="#cccccc" opacity="0.45"/><rect x="8.0" y="67.0" width="2.0" height="1.4" fill="#c586c0" opacity="0.45"/><rect x="11.0" y="67.0" width="16.0" height="1.4" fill="#c586c0" opacity="0.45"/><rect x="28.0" y="67.0" width="26.0" height="1.4" fill="#9cdcfe" opacity="0.45"/><rect x="8.0" y="71.0" width="5.0" height="1.4" fill="#cccccc" opacity="0.45"/><rect x="14.0" y="71.0" width="5.0" height="1.4" fill="#cccccc" opacity="0.45"/><rect x="20.0" y="71.0" width="3.0" height="1.4" fill="#cccccc" opacity="0.45"/><rect x="24.0" y="71.0" width="3.0" height="1.4" fill="#cccccc" opacity="0.45"/><rect x="28.0" y="71.0" width="1.0" height="1.4" fill="#cccccc" opacity="0.45"/><rect x="30.0" y="71.0" width="7.0" height="1.4" fill="#cccccc" opacity="0.45"/><rect x="38.0" y="71.0" width="3.0" height="1.4" fill="#cccccc" opacity="0.45"/><rect x="42.0" y="71.0" width="2.0" height="1.4" fill="#cccccc" opacity="0.45"/><rect x="45.0" y="71.0" width="8.0" height="1.4" fill="#cccccc" opacity="0.45"/><rect x="54.0" y="71.0" width="2.0" height="1.4" fill="#ce9178" opacity="0.45"/><rect x="56.0" y="71.0" width="13.0" height="1.4" fill="#ce9178" opacity="0.45"/><rect x="69.0" y="71.0" width="2.0" height="1.4" fill="#ce9178" opacity="0.45"/><rect x="72.0" y="71.0" width="3.0" height="1.4" fill="#cccccc" opacity="0.45"/><rect x="76.0" y="71.0" width="2.0" height="1.4" fill="#ce9178" opacity="0.45"/><rect x="78.0" y="71.0" width="11.0" height="1.4" fill="#ce9178" opacity="0.45"/><rect x="89.0" y="71.0" width="2.0" height="1.4" fill="#ce9178" opacity="0.45"/><rect x="91.0" y="71.0" width="1.0" height="1.4" fill="#cccccc" opacity="0.45"/><rect x="0" y="13" width="2.2" height="4" fill="#2ea043"/></svg>
<div class="a" style="left:2353px;top:121px;width:1px;height:1250px;background:#111111"></div>
<div class="a" style="left:2351.6px;top:555.3px;width:1.4px;height:2.6px;background:#d0d0d0"></div>
<div class="a" style="left:2351.6px;top:571.4px;width:1.4px;height:2.6px;background:#d0d0d0"></div>
<div class="a" style="left:2351.6px;top:1118.2px;width:1.4px;height:5.6px;background:#d0d0d0"></div>
<div class="a" style="left:2351.6px;top:1128.6px;width:1.4px;height:2.6px;background:#d0d0d0"></div>
<div class="a" style="left:2354px;top:242.5px;width:18px;height:2.2px;background:#a0a0a0"></div>
<div class="a" style="left:2354px;top:245px;width:7px;height:39px;background:#2ea043;opacity:0.75"></div></body></html>
